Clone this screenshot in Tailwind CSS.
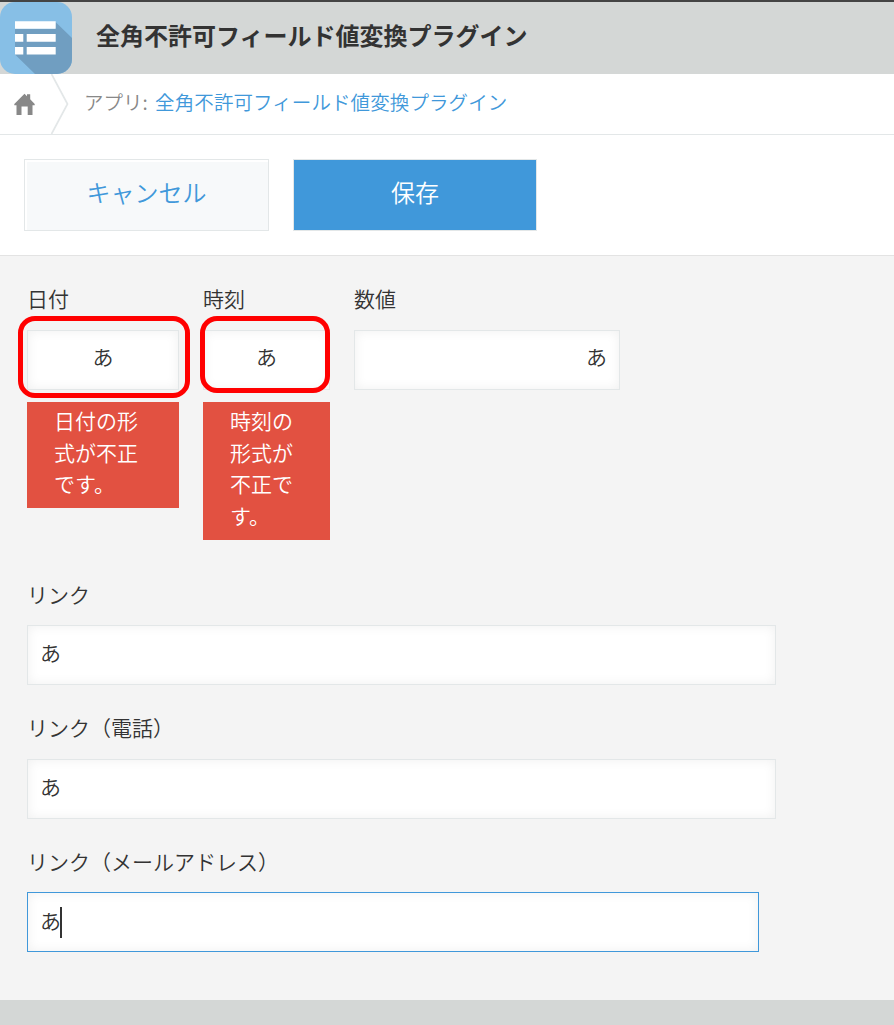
<!DOCTYPE html>
<html lang="ja">
<head>
  <meta charset="UTF-8">
  <meta name="viewport" content="width=device-width, initial-scale=1.0">
  <title>全角不許可フィールド値変換プラグイン</title>
  <script src="https://cdn.jsdelivr.net/npm/@tailwindcss/browser@4"></script>
</head>
<body class="bg-[#f4f4f4] text-[#333] text-[21px] leading-[31.5px] font-[350] font-['Noto_Sans_CJK_JP',sans-serif] min-h-screen flex flex-col overflow-hidden">
  <header class="h-[74px] border-t-2 border-[#444] bg-[#d4d7d6] flex">
    <svg class="w-[72px] h-[72px] shrink-0" viewBox="0 0 72 72">
      <clipPath id="appIcon"><rect width="72" height="72" rx="15"/></clipPath>
      <g clip-path="url(#appIcon)">
        <rect width="72" height="72" fill="#87bfe6"/>
        <path d="M55.500 20L72 36V72H35L15 52.500V27H55Z" fill="#709ec1"/>
        <path d="M15 19.300h40.700v7.500H15zM15 32h8.300v7.700H15zM26.700 32h29v7.700h-29zM15 45h8.300v7.500H15zM26.700 45h29v7.500h-29z" fill="#fff"/>
      </g>
    </svg>
    <h1 class="ml-6 mt-[15px] text-2xl leading-9 font-bold">全角不許可フィールド値変換プラグイン</h1>
  </header>

  <nav class="h-[61px] bg-white border-b border-[#e3e7e8] flex">
    <svg class="w-[72px] h-[60px] shrink-0" viewBox="0 0 72 60">
      <path d="M24.500 19.800L27 22.200V20.300h3.200v4.900l4.500 4.800v1.200H32.500V41H27.700V32.500H21.500V41H16.500V31.200H14.300V30Z" fill="#888"/>
      <path d="M51.500 0L67.500 30L51.500 60" fill="none" stroke="#e3e7e8" stroke-width="1.700"/>
    </svg>
    <p class="ml-3 mt-[13px] text-[19.5px] leading-[30px] text-[#888]">アプリ: <a href="#" class="ml-[3px] tracking-[0.09px] text-[#4098da]">全角不許可フィールド値変換プラグイン</a></p>
  </nav>

  <div class="h-[121px] bg-white border-b border-[#e3e3e3] flex gap-6 pl-6 pt-6 text-2xl">
    <button type="button" class="w-[245px] h-[72px] pb-1.5 border border-[#e3e7e8] bg-[#f7f9fa] text-[#4098da] shadow-[inset_2px_2px_1px_#fff]">キャンセル</button>
    <button type="button" class="w-[244px] h-[72px] pb-1.5 border border-[#e3e7e8] bg-[#4098da] text-white">保存</button>
  </div>

  <form class="h-[744px] pl-[27px] pt-[27px]">
    <div class="flex gap-6 h-[295.5px]">
      <div class="w-[152px] relative">
        <label for="date" class="block h-[47px]">日付</label>
        <input id="date" value="あ" class="block w-full h-[60px] pb-2 border border-[#e3e7e8] bg-white text-center shadow-[inset_0_0_12px_#f0f0f0]">
        <div class="mt-3 bg-[#e25141] text-white px-[27px] pt-[3px] pb-2">日付の形式が不正です。</div>
        <div class="absolute -left-[9px] top-[33px] w-[172px] h-[82px] border-5 border-[#ff0000] rounded-[17px]"></div>
      </div>
      <div class="w-[127px] relative">
        <label for="time" class="block h-[47px]">時刻</label>
        <input id="time" value="あ" class="block w-full h-[60px] pb-2 border border-[#e3e7e8] bg-white text-center shadow-[inset_0_0_12px_#f0f0f0]">
        <div class="mt-3 bg-[#e25141] text-white px-[27px] pt-[3px] pb-[9px]">時刻の形式が不正です。</div>
        <div class="absolute -left-[3px] top-[33px] w-[130px] h-[77px] border-5 border-[#ff0000] rounded-[17px]"></div>
      </div>
      <div class="w-[266px]">
        <label for="number" class="block h-[47px]">数値</label>
        <input id="number" value="あ" class="block w-full h-[60px] px-3 pb-2 border border-[#e3e7e8] bg-white text-right shadow-[inset_0_0_12px_#f0f0f0]">
      </div>
    </div>

    <div class="h-[133.5px]">
      <label for="link" class="block h-[46.5px]">リンク</label>
      <input id="link" value="あ" class="block w-[749px] h-[60px] px-3 pb-1.5 border border-[#e3e7e8] bg-white shadow-[inset_0_0_12px_#f0f0f0]">
    </div>
    <div class="h-[133.5px]">
      <label for="tel" class="block h-[46.5px]">リンク（電話）</label>
      <input id="tel" value="あ" class="block w-[749px] h-[60px] px-3 pb-1.5 border border-[#e3e7e8] bg-white shadow-[inset_0_0_12px_#f0f0f0]">
    </div>
    <div>
      <label for="mail" class="block h-[46.5px]">リンク（メールアドレス）</label>
      <!-- focused field with its caret -->
      <div id="mail" class="flex items-center w-[732px] h-[60px] px-3 border border-[#4098da] bg-white shadow-[inset_0_0_12px_#f0f0f0]">
        <span class="pb-[3px]">あ</span><span class="w-0.5 h-[31px] -ml-px bg-[#333]"></span>
      </div>
    </div>
  </form>

  <footer class="h-[25px] bg-[#d4d7d6]"></footer>
</body>
</html>
